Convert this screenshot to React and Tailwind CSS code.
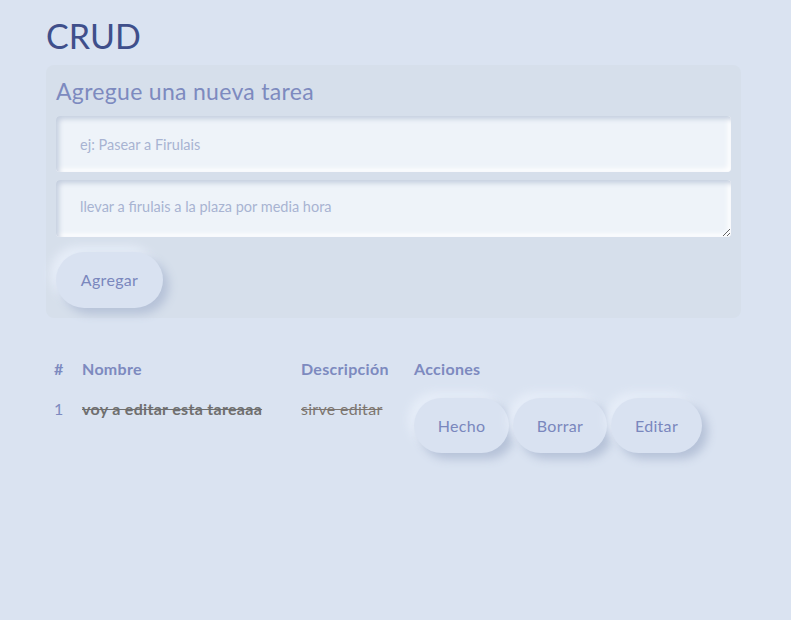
export default function App() {
  const font = { fontFamily: "Lato, 'Open Sans', sans-serif" };
  const btn =
    "rounded-full bg-[#d9e2f1] text-[#7a87bd] text-[16px] tracking-[0.3px] leading-6 shadow-[6px_6px_10px_#b6c2d8,-6px_-6px_10px_#e6edf8]";
  return (
    <div className="min-h-[620px] w-full bg-[#dae3f1] font-['Lato',sans-serif]" style={font}>
      <div className="ml-[46px] mr-[50px] pt-[14px]">
        <h1 className="text-[34px] leading-[44px] text-[#3f4f8b] font-normal">CRUD</h1>
        <div className="mt-[7px] rounded-lg bg-[#d6dfeb] p-[10px]">
          <h2 className="text-[23px] tracking-[0.3px] leading-[30px] text-[#7d8abf] mt-[1px]">Agregue una nueva tarea</h2>
          <input
            className="mt-[10px] block w-full h-[56px] rounded-[4px] bg-[#eef3f9] px-6 text-[14.5px] text-[#7d8abf] placeholder:text-[#a8b3d2] outline-none shadow-[inset_3px_3px_5px_#c5cfdf,inset_-3px_-3px_5px_#ffffff]"
            placeholder="ej: Pasear a Firulais"
          />
          <textarea
            className="mt-[8px] block w-full h-[57px] rounded-[4px] bg-[#eef3f9] px-6 pt-[15px] text-[14.5px] leading-6 text-[#7d8abf] placeholder:text-[#a8b3d2] outline-none shadow-[inset_3px_3px_5px_#c5cfdf,inset_-3px_-3px_5px_#ffffff]"
            placeholder="llevar a firulais a la plaza por media hora"
          />
          <button className={"mt-[15px] h-[56px] w-[107px] " + btn}>Agregar</button>
        </div>
        <table className="mt-[31px] text-[16px] tracking-[0.3px] leading-6 border-collapse">
          <thead>
            <tr className="text-[#7d8abf] font-bold text-left">
              <th className="p-2 w-[28px] align-top">#</th>
              <th className="p-2 w-[219px] align-top">Nombre</th>
              <th className="p-2 w-[113px] align-top">Descripción</th>
              <th className="p-2 align-top">Acciones</th>
            </tr>
          </thead>
          <tbody>
            <tr>
              <td className="p-2 align-top text-[#7d8abf]">1</td>
              <td className="p-2 align-top font-bold line-through text-[#6f6f6f] whitespace-nowrap">voy a editar esta tareaaa</td>
              <td className="p-2 align-top line-through text-[#7d7670] whitespace-nowrap">sirve editar</td>
              <td className="p-2 pt-[9px] align-top">
                <div className="flex gap-[4px]">
                  <button className={"h-[55px] w-[95px] " + btn}>Hecho</button>
                  <button className={"h-[55px] w-[94px] " + btn}>Borrar</button>
                  <button className={"h-[55px] w-[91px] " + btn}>Editar</button>
                </div>
              </td>
            </tr>
          </tbody>
        </table>
      </div>
    </div>
  );
}
